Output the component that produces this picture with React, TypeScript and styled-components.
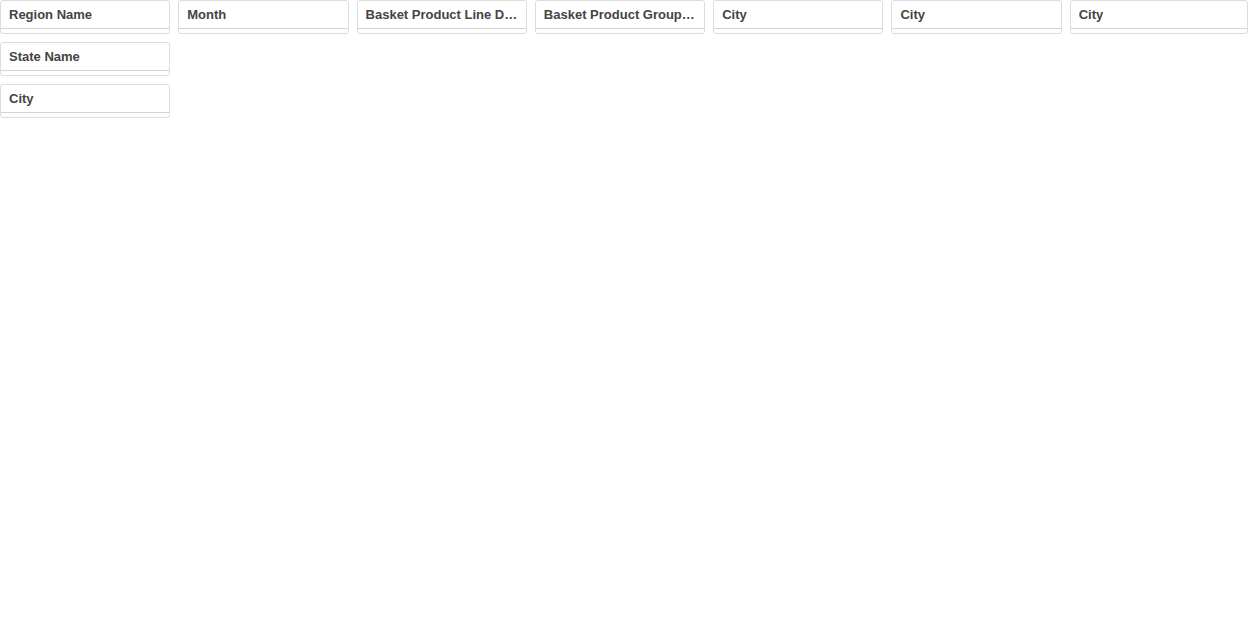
import React from "react";
import styled, { createGlobalStyle } from "styled-components";

const Global = createGlobalStyle`
  html, body { margin: 0; padding: 0; background: #fff; }
  body { font-family: "Liberation Sans", Arial, Helvetica, sans-serif; }
`;

const Page = styled.div`
  display: flex;
  flex-direction: column;
  gap: 8px;
  width: 1248px;
`;

const Row = styled.div`
  display: flex;
`;

const Slot = styled.div<{ $fill?: boolean }>`
  box-sizing: border-box;
  flex: ${(p) => (p.$fill ? "1 1 0" : "0 0 calc(100% / 7)")};
  padding-right: ${(p) => (p.$fill ? "0" : "8px")};
  min-width: 0;
`;

const Card = styled.div`
  box-sizing: border-box;
  height: 34px;
  border: 1px solid #dcdcdc;
  border-radius: 3px;
  background: #fff;
  display: flex;
  flex-direction: column;
`;

const Header = styled.div`
  box-sizing: border-box;
  height: 28px;
  flex: 0 0 28px;
  border-bottom: 1px solid #d4d4d4;
  padding: 0 8px;
  display: flex;
  align-items: center;
  font-size: 13px;
  font-weight: bold;
  color: #444;
  min-width: 0;
`;

const Title = styled.span`
  white-space: nowrap;
  overflow: hidden;
  text-overflow: ellipsis;
`;

const Filter = ({ label }: { label: string }) => (
  <Card>
    <Header>
      <Title>{label}</Title>
    </Header>
  </Card>
);

const top = [
  "Region Name",
  "Month",
  "Basket Product Line Description",
  "Basket Product Group Description",
  "City",
  "City",
];

export default function App() {
  return (
    <>
      <Global />
      <Page>
        <Row>
          {top.map((t, i) => (
            <Slot key={i}>
              <Filter label={t} />
            </Slot>
          ))}
          <Slot $fill>
            <Filter label="City" />
          </Slot>
        </Row>
        <Row>
          <Slot>
            <Filter label="State Name" />
          </Slot>
        </Row>
        <Row>
          <Slot>
            <Filter label="City" />
          </Slot>
        </Row>
      </Page>
    </>
  );
}
